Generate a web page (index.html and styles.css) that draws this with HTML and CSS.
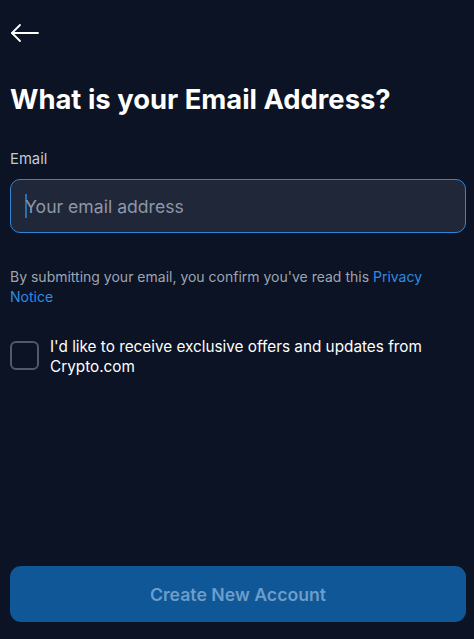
FILE: index.html
```html
<!DOCTYPE html>
<html>
<head>
<meta charset="utf-8">
<link rel="stylesheet" href="styles.css">
</head>
<body>
<div class="screen">
  <div class="topbar">
    <svg class="back" width="30" height="20" viewBox="0 0 30 20" fill="none" stroke="#ffffff" stroke-width="1.8" stroke-linecap="round" stroke-linejoin="round">
      <path d="M28 10H2"/>
      <path d="M10 2L2 10L10 18"/>
    </svg>
  </div>
  <h1 class="title">What is your Email Address?</h1>
  <div class="label">Email</div>
  <div class="input">
    <span class="caret"></span><span class="placeholder">Your email address</span>
  </div>
  <p class="notice">By submitting your email, you confirm you've read this <a class="link">Privacy</a> <a class="link">Notice</a></p>
  <div class="consent">
    <span class="checkbox"></span>
    <span class="consent-text">I'd like to receive exclusive offers and updates from Crypto.com</span>
  </div>
  <div class="spacer"></div>
  <div class="button">Create New Account</div>
</div>
</body>
</html>
```

FILE: styles.css
```css
html, body {
  margin: 0;
  padding: 0;
  background: #0b1324;
}
body {
  font-family: Inter, "Noto Sans", sans-serif;
  color: #ffffff;
}
.screen {
  width: 474px;
  height: 639px;
  box-sizing: border-box;
  padding: 0 8px 0 10px;
  display: flex;
  flex-direction: column;
}
.topbar {
  height: 66px;
  display: flex;
  align-items: flex-start;
  padding-top: 23px;
  box-sizing: border-box;
}
.back {
  display: block;
}
.title {
  margin: 17px 0 0 0;
  font-size: 27.4px;
  line-height: 32px;
  font-weight: 700;
  color: #ffffff;
}
.label {
  margin-top: 35px;
  font-size: 14.8px;
  line-height: 18px;
  color: #c3c8d1;
}
.input {
  margin-top: 11px;
  height: 54px;
  box-sizing: border-box;
  border: 1.5px solid #2f86d6;
  border-radius: 10px;
  background: #1f2739;
  display: flex;
  align-items: center;
  padding-left: 14px;
}
.caret {
  width: 2px;
  height: 24px;
  background: #2b6fb3;
  margin-right: -2px;
}
.placeholder {
  font-size: 17.6px;
  color: #8f97a6;
}
.notice {
  margin: 34px 0 0 0;
  font-size: 14px;
  line-height: 20px;
  color: #9ea5b2;
  padding-right: 30px;
}
.link {
  color: #2e8ce3;
  text-decoration: none;
}
.consent {
  margin-top: 30px;
  display: flex;
  align-items: flex-start;
  gap: 11px;
}
.checkbox {
  flex: none;
  width: 29px;
  height: 29px;
  box-sizing: border-box;
  border: 2px solid #525a68;
  border-radius: 6px;
  margin-top: 4px;
}
.consent-text {
  font-size: 15.3px;
  line-height: 20px;
  color: #ffffff;
  padding-right: 20px;
}
.spacer {
  flex: 1;
}
.button {
  height: 56px;
  margin-bottom: 17px;
  border-radius: 11px;
  background: #0f5796;
  color: #6c9dcb;
  font-size: 17.7px;
  font-weight: 600;
  display: flex;
  align-items: center;
  justify-content: center;
}
```
